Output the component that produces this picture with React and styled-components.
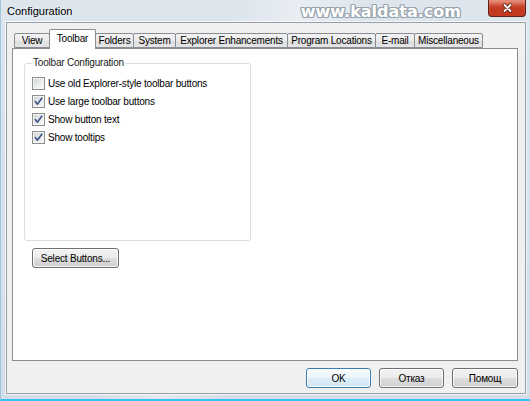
import React from 'react'
import styled, { createGlobalStyle } from 'styled-components'

const GlobalStyle = createGlobalStyle`
  html, body {
    margin: 0;
    padding: 0;
    overflow: hidden;
    background: #d7e0e9;
  }
  * {
    box-sizing: border-box;
  }
`

const tabs = [
  { label: 'View', w: 36 },
  { label: 'Toolbar', w: 47, active: true },
  { label: 'Folders', w: 39 },
  { label: 'System', w: 43 },
  { label: 'Explorer Enhancements', w: 113 },
  { label: 'Program Locations', w: 89 },
  { label: 'E-mail', w: 40 },
  { label: 'Miscellaneous', w: 69 },
]

const options = [
  { label: 'Use old Explorer-style toolbar buttons', checked: false },
  { label: 'Use large toolbar buttons', checked: true },
  { label: 'Show button text', checked: true },
  { label: 'Show tooltips', checked: true },
]

const CheckMark = () => (
  <svg width="9" height="9" viewBox="0 0 9 9">
    <path d="M1.3 4.6 L3.4 7.2 L7.8 1.2" fill="none" stroke="#3d5288" strokeWidth="1.6" strokeLinecap="round" strokeLinejoin="round" />
  </svg>
)

// white cross with a dark rim, as on the caption close button
const CloseGlyph = () => (
  <svg width="13" height="10" viewBox="0 0 13 10">
    <path d="M3.5 2 L9.5 8 M9.5 2 L3.5 8" stroke="#5a1d12" strokeWidth="3.4" strokeLinecap="round" />
    <path d="M3.5 2 L9.5 8 M9.5 2 L3.5 8" stroke="#ffffff" strokeWidth="1.8" strokeLinecap="round" />
  </svg>
)

const App = () => {
  return (
    <Window>
      <GlobalStyle />
      <TitleBar>
        <Title>Configuration</Title>
        <Watermark>www.kaldata.com</Watermark>
        <CloseButton><CloseGlyph /></CloseButton>
      </TitleBar>
      <Frame>
        <Client>
          <TabStrip>
            {tabs.map((t) => (
              <Tab key={t.label} $w={t.w} $active={t.active}>{t.label}</Tab>
            ))}
          </TabStrip>
          <Panel>
            <GroupBox>
              <GroupLabel>Toolbar Configuration</GroupLabel>
              {options.map((o) => (
                <CheckRow key={o.label}>
                  <CheckBox>{o.checked && <CheckMark />}</CheckBox>
                  <CheckLabel>{o.label}</CheckLabel>
                </CheckRow>
              ))}
            </GroupBox>
            <SelectButton $w={87}>Select Buttons...</SelectButton>
          </Panel>
          <ButtonRow>
            <Button $w={65} $default>OK</Button>
            <Button $w={65}>Отказ</Button>
            <Button $w={66}>Помощ</Button>
          </ButtonRow>
        </Client>
      </Frame>
    </Window>
  )
}

export default App

const Window = styled.div`
  width: 530px;
  height: 401px;
  display: flex;
  flex-direction: column;
  overflow: hidden;
  font-family: "Liberation Sans", Arial, sans-serif;
  background:
    linear-gradient(110deg, rgba(255,255,255,0) 35%, rgba(255,255,255,0.35) 45%, rgba(255,255,255,0) 55%),
    linear-gradient(180deg, #dde5ed 0%, #d5dee8 100%);
  border-left: 1px solid #9fc6dc;
  border-bottom: 2px solid #36c3ef;
`

const TitleBar = styled.div`
  height: 22px;
  flex: none;
  display: flex;
  align-items: flex-start;
  padding-left: 6px;
`

const Title = styled.div`
  font-size: 11px;
  line-height: 22px;
  color: #000;
  text-shadow: 0 0 6px rgba(255,255,255,0.9);
`

const Watermark = styled.div`
  margin-left: auto;
  margin-right: 27px;
  margin-top: 2px;
  font-family: "DejaVu Sans", sans-serif;
  font-size: 16px;
  font-weight: bold;
  line-height: 19px;
  color: #ffffff;
  text-shadow:
    1px 0 0 #98a3ad, -1px 0 0 #98a3ad, 0 1px 0 #98a3ad, 0 -1px 0 #98a3ad,
    1px 1px 0 #98a3ad, -1px -1px 0 #98a3ad, 1px -1px 0 #98a3ad, -1px 1px 0 #98a3ad;
`

const CloseButton = styled.div`
  width: 38px;
  height: 17px;
  flex: none;
  margin-right: 4px;
  display: flex;
  align-items: center;
  justify-content: center;
  border: 1px solid #5e2219;
  border-top: none;
  border-radius: 0 0 4px 4px;
  background: #c43a20;
  box-shadow: inset 0 6px 4px -2px rgba(255,200,185,0.6);
`

const Frame = styled.div`
  flex: 1;
  display: flex;
  padding: 0 4px 5px 5px;
`

const Client = styled.div`
  flex: 1;
  display: flex;
  flex-direction: column;
  background: #f0f0f0;
  border: 1px solid #9a9fa6;
  box-shadow: 0 0 0 1px rgba(255,255,255,0.7);
  padding: 6px 7px 5px 5px;
`

const TabStrip = styled.div`
  height: 19px;
  flex: none;
  display: flex;
  align-items: flex-end;
  margin-left: 2px;
  position: relative;
  z-index: 1;
`

const Tab = styled.div`
  width: ${(p) => p.$w}px;
  height: ${(p) => (p.$active ? 20 : 15)}px;
  margin-bottom: ${(p) => (p.$active ? -1 : 0)}px;
  margin-left: -1px;
  display: flex;
  align-items: center;
  justify-content: center;
  padding-bottom: ${(p) => (p.$active ? 2 : 0)}px;
  font-size: 10px;
  letter-spacing: -0.2px;
  color: #000;
  white-space: nowrap;
  border: 1px solid #898c95;
  border-bottom: ${(p) => (p.$active ? 'none' : '1px solid #898c95')};
  border-radius: 2px 2px 0 0;
  background: ${(p) => (p.$active ? '#ffffff' : 'linear-gradient(180deg, #f3f3f3 0%, #ebebeb 50%, #dedede 51%, #e4e4e4 100%)')};
  position: relative;
  z-index: ${(p) => (p.$active ? 2 : 1)};
  &:first-child {
    margin-left: 0;
  }
`

const Panel = styled.div`
  flex: 1;
  background: #ffffff;
  border: 1px solid #898c95;
  padding: 14px 0 0 11px;
  display: flex;
  flex-direction: column;
  align-items: flex-start;
`

const GroupBox = styled.div`
  position: relative;
  width: 227px;
  height: 178px;
  border: 1px solid #d5dfe5;
  border-radius: 3px;
  padding: 10px 0 0 7px;
`

const GroupLabel = styled.span`
  position: absolute;
  top: -7px;
  left: 7px;
  padding: 0 1px;
  background: #ffffff;
  font-size: 10px;
  line-height: 12px;
  letter-spacing: -0.2px;
  color: #1a1a1a;
`

const CheckRow = styled.div`
  height: 18px;
  display: flex;
  align-items: center;
  gap: 3px;
`

const CheckBox = styled.span`
  width: 13px;
  height: 13px;
  flex: none;
  display: flex;
  align-items: center;
  justify-content: center;
  border: 1px solid #8e8f8f;
  background: linear-gradient(135deg, #cdd0d4 0%, #eceeef 60%, #f8f8f8 100%);
  box-shadow: inset 0 0 0 1px #f4f4f4;
`

const CheckLabel = styled.span`
  font-size: 10px;
  letter-spacing: -0.2px;
  color: #000;
  white-space: nowrap;
`

const Button = styled.div`
  width: ${(p) => p.$w}px;
  height: 20px;
  flex: none;
  display: flex;
  align-items: center;
  justify-content: center;
  font-size: 10px;
  letter-spacing: -0.2px;
  color: #000;
  white-space: nowrap;
  border: 1px solid ${(p) => (p.$default ? '#3c7fb1' : '#707070')};
  border-radius: 3px;
  background: ${(p) =>
    p.$default
      ? 'linear-gradient(180deg, #f6fbfe 0%, #ebf5fb 50%, #dcedf8 51%, #d2e7f5 100%)'
      : 'linear-gradient(180deg, #f2f2f2 0%, #ebebeb 50%, #dddddd 51%, #cfcfcf 100%)'};
  box-shadow: inset 0 0 0 1px rgba(255,255,255,0.8);
`

const SelectButton = styled(Button)`
  margin: 7px 0 0 8px;
`

const ButtonRow = styled.div`
  height: 20px;
  flex: none;
  margin-top: 7px;
  display: flex;
  justify-content: flex-end;
  gap: 8px;
`
